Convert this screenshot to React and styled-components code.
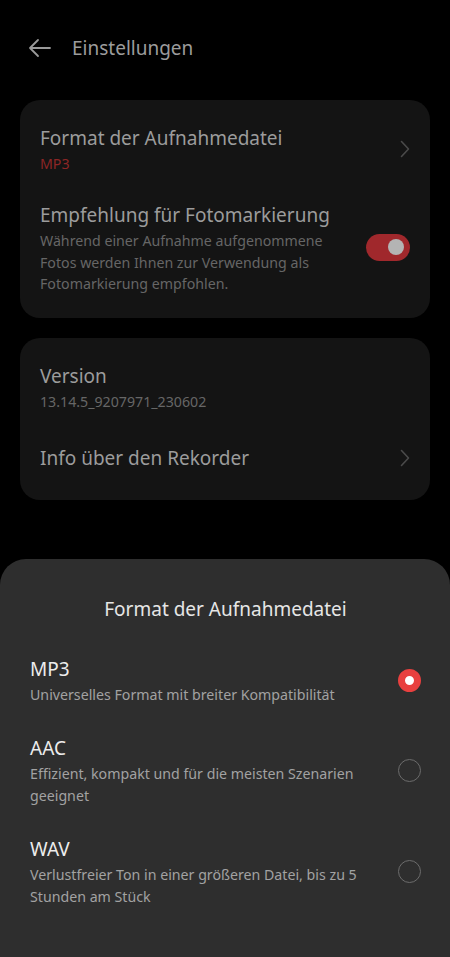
import React from 'react';
import styled, { createGlobalStyle } from 'styled-components';

const GlobalStyle = createGlobalStyle`
  html, body {
    margin: 0;
    padding: 0;
    background: #000;
  }
  body {
    font-family: "Noto Sans", "Open Sans", sans-serif;
    -webkit-font-smoothing: antialiased;
  }
`;

const Page = styled.div`
  position: relative;
  width: 450px;
  height: 957px;
  overflow: hidden;
  background: #000;
`;

const Header = styled.header`
  display: flex;
  align-items: center;
  gap: 20px;
  height: 48px;
  padding: 24px 0 28px 28px;
`;

const BackButton = styled.button`
  display: flex;
  align-items: center;
  justify-content: center;
  width: 24px;
  height: 24px;
  padding: 0;
  border: none;
  background: none;
  color: #9a9a9a;
`;

const HeaderTitle = styled.h1`
  margin: 0;
  font-size: 19px;
  font-weight: 400;
  color: #9c9c9c;
`;

const Cards = styled.div`
  display: flex;
  flex-direction: column;
  gap: 20px;
  padding: 0 20px;
`;

const Card = styled.section`
  display: flex;
  flex-direction: column;
  gap: ${p => p.$gap || 0}px;
  padding: ${p => p.$pad || '18px 20px'};
  background: #141414;
  border-radius: 20px;
`;

const Row = styled.div`
  display: flex;
  align-items: center;
  justify-content: space-between;
  gap: 16px;
`;

const RowText = styled.div`
  display: flex;
  flex-direction: column;
  min-width: 0;
`;

const RowTitle = styled.div`
  font-size: 19px;
  line-height: 30px;
  color: #9c9c9c;
`;

const RowSub = styled.div`
  font-size: 14.2px;
  line-height: 21.5px;
  color: ${p => (p.$accent ? '#8d2626' : '#666')};
`;

const Chevron = styled.svg`
  flex: none;
  width: 10px;
  height: 18px;
`;

const Toggle = styled.div`
  position: relative;
  flex: none;
  width: 44px;
  height: 27px;
  border-radius: 14px;
  background: #a0282c;

  &::after {
    content: '';
    position: absolute;
    top: 5.5px;
    right: 6px;
    width: 16px;
    height: 16px;
    border-radius: 50%;
    background: #b4b4b4;
  }
`;

const Sheet = styled.div`
  position: absolute;
  left: 0;
  right: 0;
  bottom: 0;
  height: 398px;
  background: #2e2e2e;
  border-radius: 26px 26px 0 0;
  padding: 36px 29px 0 30px;
  box-sizing: border-box;
`;

const SheetTitle = styled.h2`
  margin: 0 0 31px;
  text-align: center;
  font-size: 19px;
  font-weight: 400;
  line-height: 28px;
  color: #e6e6e6;
`;

const Options = styled.div`
  display: flex;
  flex-direction: column;
  gap: 26px;
`;

const Option = styled.label`
  display: flex;
  align-items: center;
  justify-content: space-between;
  gap: 24px;
`;

const OptionTitle = styled.div`
  font-size: 19px;
  line-height: 30px;
  color: #ececec;
`;

const OptionDesc = styled.div`
  font-size: 14.2px;
  line-height: 22.5px;
  color: #a2a2a2;
`;

const Radio = styled.span`
  flex: none;
  box-sizing: border-box;
  width: 23px;
  height: 23px;
  border-radius: 50%;
  border: ${p => (p.$checked ? '7.5px solid #e8403f' : '1.5px solid #6c6c6c')};
  background: ${p => (p.$checked ? '#fff' : 'transparent')};
`;

function ChevronIcon() {
  return (
    <Chevron viewBox="0 0 10 18" fill="none">
      <path d="M1.5 1.5 L8.5 9 L1.5 16.5" stroke="#4a4a4a" strokeWidth="1.6" strokeLinecap="round" strokeLinejoin="round" />
    </Chevron>
  );
}

const formats = [
  { name: 'MP3', desc: 'Universelles Format mit breiter Kompatibilität', checked: true },
  { name: 'AAC', desc: 'Effizient, kompakt und für die meisten Szenarien geeignet' },
  { name: 'WAV', desc: 'Verlustfreier Ton in einer größeren Datei, bis zu 5 Stunden am Stück' },
];

export default function App() {
  return (
    <Page>
      <GlobalStyle />
      <Header>
        <BackButton aria-label="Zurück">
          <svg width="24" height="24" viewBox="0 0 24 24" fill="none">
            <path d="M22 12 H2 M10 4 L2 12 L10 20" stroke="currentColor" strokeWidth="1.8" strokeLinecap="round" strokeLinejoin="round" />
          </svg>
        </BackButton>
        <HeaderTitle>Einstellungen</HeaderTitle>
      </Header>

      <Cards>
        <Card $gap={25.5} $pad="23px 20px 23.5px">
          <Row>
            <RowText>
              <RowTitle>Format der Aufnahmedatei</RowTitle>
              <RowSub $accent>MP3</RowSub>
            </RowText>
            <ChevronIcon />
          </Row>
          <Row>
            <RowText>
              <RowTitle>Empfehlung für Fotomarkierung</RowTitle>
              <RowSub>Während einer Aufnahme aufgenommene Fotos werden Ihnen zur Verwendung als Fotomarkierung empfohlen.</RowSub>
            </RowText>
            <Toggle />
          </Row>
        </Card>

        <Card $gap={30.5} $pad="23px 20px 27px">
          <RowText>
            <RowTitle>Version</RowTitle>
            <RowSub>13.14.5_9207971_230602</RowSub>
          </RowText>
          <Row>
            <RowTitle>Info über den Rekorder</RowTitle>
            <ChevronIcon />
          </Row>
        </Card>
      </Cards>

      <Sheet>
        <SheetTitle>Format der Aufnahmedatei</SheetTitle>
        <Options>
          {formats.map(f => (
            <Option key={f.name}>
              <RowText>
                <OptionTitle>{f.name}</OptionTitle>
                <OptionDesc>{f.desc}</OptionDesc>
              </RowText>
              <Radio $checked={f.checked} />
            </Option>
          ))}
        </Options>
      </Sheet>
    </Page>
  );
}
